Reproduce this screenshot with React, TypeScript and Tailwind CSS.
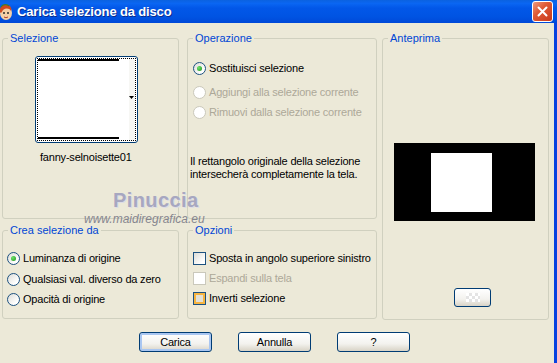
import type { ReactNode } from "react";

const txt = "text-[11px] leading-[13px] tracking-[-0.2px]";

function Radio({ checked, disabled }: { checked?: boolean; disabled?: boolean }) {
  return (
    <span
      className={`flex h-[13px] w-[13px] shrink-0 items-center justify-center rounded-full border ${
        disabled
          ? "border-[#CAC8BB] bg-white"
          : "border-[#1C5180] bg-[linear-gradient(135deg,#DCDCD7,#FFFFFF_75%)]"
      }`}
    >
      {checked && (
        <span className="h-[5px] w-[5px] rounded-full bg-[radial-gradient(circle_at_35%_35%,#6FE36B,#1B921A)]" />
      )}
    </span>
  );
}

function Check({ disabled, hot }: { disabled?: boolean; hot?: boolean }) {
  let cls = "border-[#1C5180] bg-[linear-gradient(135deg,#DCDCD7,#FFFFFF_80%)]";
  if (disabled) cls = "border-[#CAC8BB] bg-white";
  if (hot) cls = "border-[#1C5180] bg-[#E2E0D6] shadow-[inset_0_0_0_2px_#F6B440]";
  return <span className={`h-[13px] w-[13px] shrink-0 border ${cls}`} />;
}

function Group({
  title,
  className,
  children,
}: {
  title: string;
  className: string;
  children?: ReactNode;
}) {
  return (
    <fieldset className={`min-w-0 rounded-[3px] border border-[#D0D0BF] ${className}`}>
      <legend className="ml-[5px] px-[2px] text-[11px] leading-[12px] text-[#0046D5]">
        {title}
      </legend>
      {children}
    </fieldset>
  );
}

function Row({ control, label, disabled, className = "" }: {
  control: ReactNode;
  label: string;
  disabled?: boolean;
  className?: string;
}) {
  return (
    <div className={`flex h-[16px] items-center gap-[3px] ${className}`}>
      {control}
      <span className={`${txt} whitespace-nowrap ${disabled ? "text-[#ACA899]" : "text-black"}`}>
        {label}
      </span>
    </div>
  );
}

function XpButton({ label, focused }: { label: string; focused?: boolean }) {
  return (
    <button
      className={`h-[20px] w-[73px] rounded-[3px] border border-[#003C74] bg-[linear-gradient(to_bottom,#FFFFFF,#F3F2EE_60%,#D8D3C6)] ${txt} text-black ${
        focused ? "shadow-[inset_0_0_0_2px_#A9C6F1]" : ""
      }`}
    >
      {label}
    </button>
  );
}

export default function App() {
  return (
    <div className="relative h-[363px] w-[557px] overflow-hidden bg-[#ECE9D8] font-['Liberation_Sans',Arial,sans-serif]">
      {/* title bar */}
      <div className="flex h-[23px] items-center bg-[linear-gradient(to_bottom,#0B62E0,#0A66F2_15%,#0257E8_35%,#0054E3_70%,#0049D8)]">
        <svg width="14" height="18" viewBox="0 0 14 18" className="-ml-[1px] mt-[1px]">
          <ellipse cx="7" cy="10" rx="6" ry="7" fill="#F4CFA6" />
          <path d="M1 9 C0 3 5 0 9 2 C12 3 13 6 12 8 C10 5 7 5 4 7 C3 9 2 11 1 9 Z" fill="#D2491E" />
          <path d="M2 4 C4 1 8 1 10 3" stroke="#3E7F2A" strokeWidth="1.2" fill="none" />
          <circle cx="5" cy="10" r="1" fill="#2B2B2B" />
          <circle cx="9" cy="10" r="1" fill="#2B2B2B" />
          <path d="M5 14 Q7 15.5 9 14" stroke="#B0402A" strokeWidth="1" fill="none" />
        </svg>
        <span className="ml-[4px] text-[13px] font-bold leading-[16px] tracking-[-0.15px] text-white [text-shadow:1px_1px_0_#0A2D8F]">
          Carica selezione da disco
        </span>
        <div className="ml-auto mr-[4px] flex h-[21px] w-[21px] items-center justify-center rounded-[3px] border border-white bg-[linear-gradient(135deg,#EE9A7E,#E05A35_40%,#C8391B)]">
          <svg width="11" height="11" viewBox="0 0 11 11">
            <path d="M1.5 1.5 L9.5 9.5 M9.5 1.5 L1.5 9.5" stroke="white" strokeWidth="2" strokeLinecap="round" />
          </svg>
        </div>
      </div>

      {/* body */}
      <div className="h-[340px] border-r-[3px] border-[#0842E0] pl-[2px] pt-[9px]">
        <div className="grid grid-cols-[185px_195px_167px] grid-rows-[187px_95px] gap-y-[5px]">
          <Group title="Selezione" className="h-[187px] w-[177px]">
            <div className="ml-[32px] mt-[12px] flex h-[87px] w-[103px] rounded-[3px] border border-[#003C74] bg-white p-[1px]">
              <div className="flex flex-1 border border-dotted border-black">
                <div className="flex flex-1 flex-col justify-between pb-[1px]">
                  <div className="h-[2px] bg-black" />
                  <div className="h-[2px] bg-black" />
                </div>
                <div className="ml-[10px] flex w-[6px] items-center bg-[#F7F7F4]">
                  <svg width="5" height="3" viewBox="0 0 5 3" className="-mt-[4px]">
                    <path d="M0 0 H5 L2.5 3 Z" fill="black" />
                  </svg>
                </div>
              </div>
            </div>
            <div className={`ml-[37px] mt-[8px] ${txt} text-black`}>fanny-selnoisette01</div>
          </Group>

          <Group title="Operazione" className="h-[187px] w-[190px]">
            <div className="pl-[5px]">
              <Row className="mt-[16px]" control={<Radio checked />} label="Sostituisci selezione" />
              <Row className="mt-[8px]" control={<Radio disabled />} label="Aggiungi alla selezione corrente" disabled />
              <Row className="mt-[4px]" control={<Radio disabled />} label="Rimuovi dalla selezione corrente" disabled />
            </div>
            <p className={`ml-[2px] mt-[35px] ${txt} text-black`}>
              Il rettangolo originale della selezione
              <br />
              intersecherà completamente la tela.
            </p>
          </Group>

          <Group title="Anteprima" className="row-span-2 h-[288px] w-[167px]">
            <div className="ml-[11px] mt-[99px] flex h-[78px] w-[141px] bg-black pl-[37px] pt-[10px]">
              <div className="h-[59px] w-[61px] bg-white" />
            </div>
            <div className="ml-[71px] mt-[67px] flex h-[19px] w-[37px] items-center justify-center rounded-[3px] border border-[#003C74] bg-[linear-gradient(to_bottom,#FFFFFF,#F3F2EE_60%,#D8D3C6)]">
              <div className="h-[9px] w-[14px] bg-[repeating-conic-gradient(#E4E4E4_0_25%,#FFFFFF_0_50%)] bg-[length:6px_6px]" />
            </div>
          </Group>

          <Group title="Crea selezione da" className="h-[95px] w-[177px]">
            <div className="pl-[4px]">
              <Row className="mt-[14px]" control={<Radio checked />} label="Luminanza di origine" />
              <Row className="mt-[5px]" control={<Radio />} label="Qualsiasi val. diverso da zero" />
              <Row className="mt-[4px]" control={<Radio />} label="Opacità di origine" />
            </div>
          </Group>

          <Group title="Opzioni" className="h-[95px] w-[190px]">
            <div className="pl-[5px]">
              <Row className="mt-[14px]" control={<Check />} label="Sposta in angolo superiore sinistro" />
              <Row className="mt-[4px]" control={<Check disabled />} label="Espandi sulla tela" disabled />
              <Row className="mt-[4px]" control={<Check hot />} label="Inverti selezione" />
            </div>
          </Group>
        </div>

        <div className="ml-[137px] mt-[13px] flex gap-[26px]">
          <XpButton label="Carica" focused />
          <XpButton label="Annulla" />
          <XpButton label="?" />
        </div>
      </div>

      {/* watermark */}
      <div className="pointer-events-none absolute left-[113px] top-[190px] text-[20px] font-bold leading-[20px] tracking-[0.4px] text-[#A7A7C0] [text-shadow:1px_1px_0_#DCDCE6]">
        Pinuccia
      </div>
      <div className="pointer-events-none absolute left-[84px] top-[213px] text-[12px] italic leading-[12px] text-[#86868F]">
        www.maidiregrafica.eu
      </div>
    </div>
  );
}
